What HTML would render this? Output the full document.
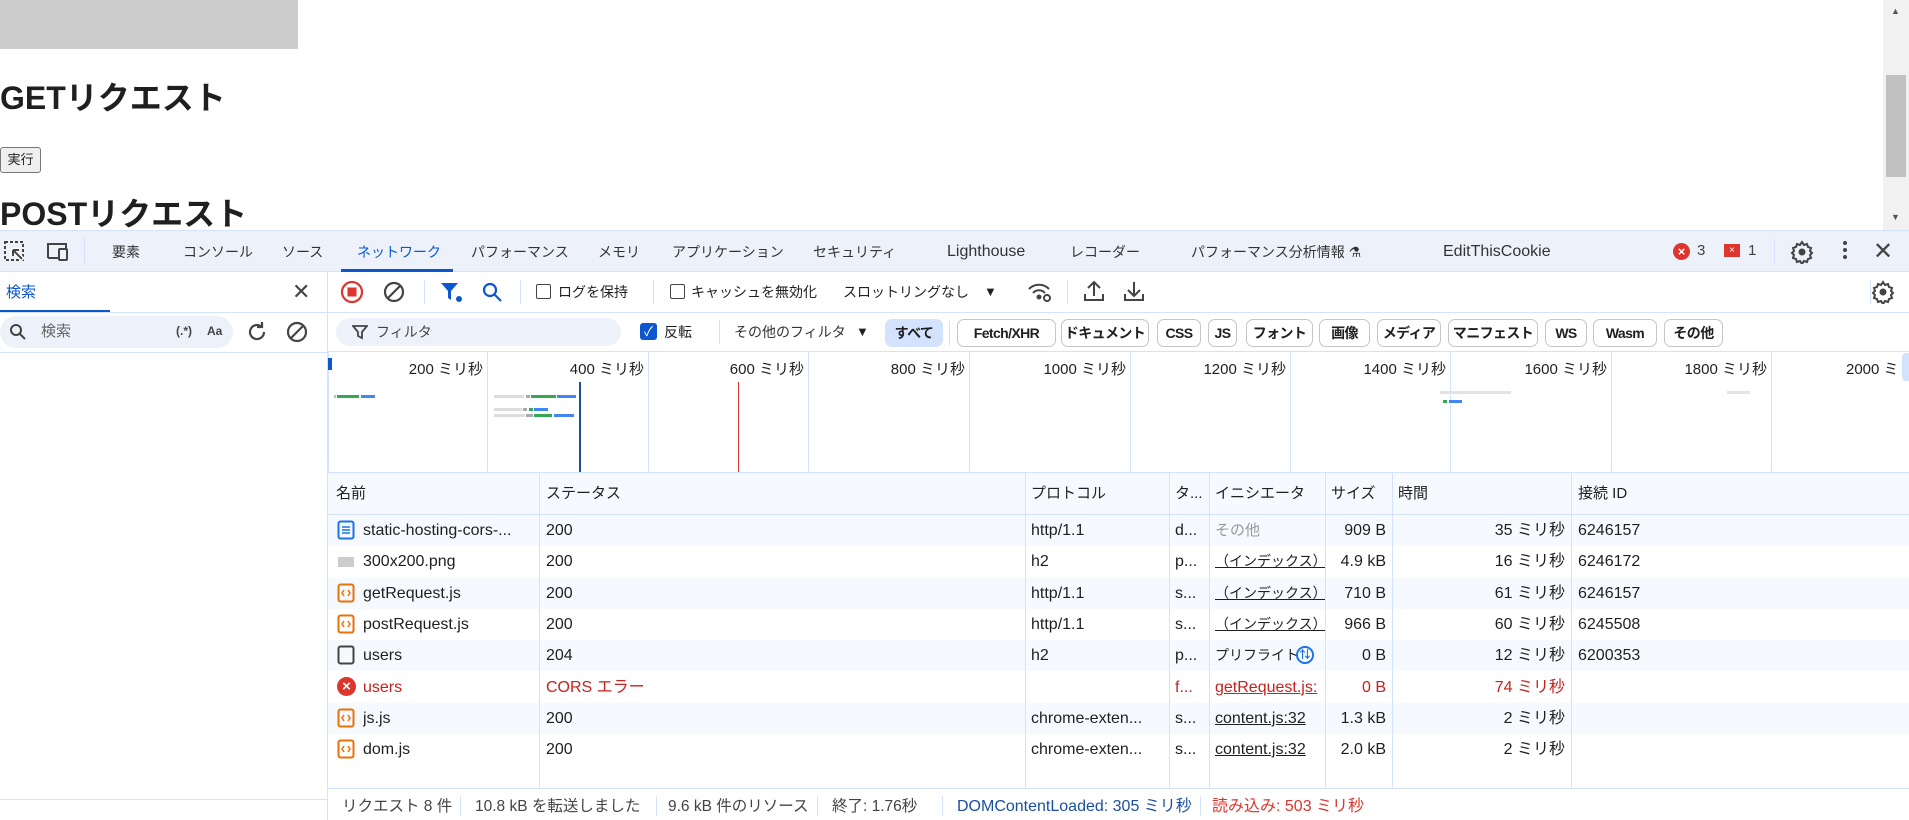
<!DOCTYPE html>
<html><head><meta charset="utf-8"><style>
*{margin:0;padding:0;box-sizing:border-box}
body{width:1909px;height:820px;overflow:hidden;position:relative;background:#fff;font-family:"Liberation Sans","Noto Sans CJK JP",sans-serif;color:#1f1f1f}
.a{position:absolute;white-space:nowrap}
.t{font-size:15px;line-height:18px}
.tj{font-size:14px;line-height:18px}
.vl{position:absolute;width:1px;background:#d3e3fd}
.hl{position:absolute;height:1px;background:#d3e3fd}
.chip{position:absolute;top:319px;height:28px;border:1px solid #c4c7c5;border-radius:7px;font-size:14px;line-height:26px;text-align:center;font-weight:bold;color:#1f1f1f;white-space:nowrap;overflow:hidden;letter-spacing:-0.6px}
.row{position:absolute;left:328px;width:1581px;height:31px}
.cell{position:absolute;font-size:16px;line-height:31px;white-space:nowrap;overflow:hidden}
.r{text-align:right}
.cb{position:absolute;width:15px;height:15px;border:1.5px solid #444;border-radius:2px}
.st{font-size:15.5px;line-height:18px}
</style></head><body>
<div class="a" style="left:0;top:0;width:298px;height:49px;background:#ccc"></div>
<div class="a" style="left:0;top:78px;font-size:32px;font-weight:bold;line-height:40px">GETリクエスト</div>
<div class="a" style="left:0;top:147px;width:41px;height:26px;border:1px solid #777;border-radius:3px;background:#efefef;font-size:13px;line-height:24px;text-align:center">実行</div>
<div class="a" style="left:0;top:194px;font-size:32px;font-weight:bold;line-height:40px">POSTリクエスト</div>
<div class="a" style="left:1883px;top:0;width:26px;height:231px;background:#f1f1f1"></div>
<div class="a" style="left:1886px;top:75px;width:20px;height:102px;background:#c1c1c1"></div>
<div class="a" style="left:1891px;top:6px;font-size:9px;color:#555">▲</div>
<div class="a" style="left:1891px;top:212px;font-size:9px;color:#555">▼</div>

<div class="a" style="left:0;top:230px;width:1909px;height:42px;background:#edf2fa;border-top:1px solid #d3e3fd;border-bottom:1px solid #d3e3fd"></div>
<svg class="a" style="left:3px;top:240px" width="100" height="24" viewBox="0 0 100 24" fill="none" stroke="#444" stroke-width="2">
<rect x="2" y="2" width="18" height="18" stroke-dasharray="3 2"/><path d="M10 10l10 10M10 10h6M10 10v6" stroke="#fff" stroke-width="5"/><path d="M10 10l9 9M10 10h6M10 10v6"/>
<path d="M45 18V4h18v5M45 18h10"/><rect x="56" y="9" width="8" height="11" rx="1"/></svg>
<div class="vl" style="left:84px;top:238px;height:26px"></div>
<div class="a tj" style="top:243px;left:112px;color:#333">要素</div>
<div class="a tj" style="top:243px;left:183px;color:#333">コンソール</div>
<div class="a tj" style="top:243px;left:282px;color:#333">ソース</div>
<div class="a tj" style="top:243px;left:357px;color:#0b57d0">ネットワーク</div>
<div class="a" style="top:269px;left:341px;width:112px;height:3px;background:#0b57d0"></div>
<div class="a tj" style="top:243px;left:471px;color:#333">パフォーマンス</div>
<div class="a tj" style="top:243px;left:598px;color:#333">メモリ</div>
<div class="a tj" style="top:243px;left:672px;color:#333">アプリケーション</div>
<div class="a tj" style="top:243px;left:813px;color:#333">セキュリティ</div>
<div class="a" style="top:243px;left:947px;color:#333;font-size:16px;line-height:18px">Lighthouse</div>
<div class="a tj" style="top:243px;left:1070px;color:#333">レコーダー</div>
<div class="a tj" style="top:243px;left:1191px;color:#333">パフォーマンス分析情報 ⚗</div>
<div class="a" style="top:243px;left:1443px;color:#333;font-size:16px;line-height:18px">EditThisCookie</div>
<div class="a" style="left:1673px;top:243px;width:17px;height:17px;border-radius:50%;background:#dc362e;color:#fff;font-size:13px;line-height:17px;text-align:center;font-weight:bold">×</div>
<div class="a t" style="top:242px;left:1697px;color:#444">3</div>
<div class="a" style="left:1724px;top:244px;width:16px;height:13px;background:#dc362e;color:#fff;font-size:10px;line-height:13px;text-align:center">×</div>
<div class="a t" style="top:242px;left:1748px;color:#444">1</div>
<div class="vl" style="left:1774px;top:239px;height:24px"></div>
<svg class="a" style="left:1790px;top:240px" width="24" height="24" viewBox="0 0 24 24"><path d="M12 2l2 3 3-1 1 3 3 1-1 3 2 2-2 2 1 3-3 1-1 3-3-1-2 3-2-3-3 1-1-3-3-1 1-3-2-2 2-2-1-3 3-1 1-3 3 1z" fill="none" stroke="#444" stroke-width="2"/><circle cx="12" cy="12" r="3.5" fill="#444"/></svg>
<div class="a" style="left:1843px;top:241px;width:4px;height:4px;border-radius:50%;background:#444;box-shadow:0 7px #444,0 14px #444"></div>
<div class="a" style="left:1873px;top:237px;font-size:24px;color:#444">✕</div>

<div class="vl" style="left:327px;top:272px;height:548px"></div>
<div class="a t" style="left:6px;top:284px;color:#0b57d0">検索</div>
<div class="a" style="left:0;top:310px;width:110px;height:2px;background:#0b57d0"></div>
<div class="a" style="left:292px;top:279px;font-size:22px;color:#444">✕</div>
<div class="hl" style="left:0;top:312px;width:327px"></div>
<div class="a" style="left:0;top:316px;width:233px;height:32px;border-radius:16px;background:#edf2fa"></div>
<svg class="a" style="left:9px;top:323px" width="18" height="18" viewBox="0 0 18 18" fill="none" stroke="#444" stroke-width="2"><circle cx="7" cy="7" r="5"/><path d="M11 11l5 5"/></svg>
<div class="a t" style="left:41px;top:323px;color:#666">検索</div>
<div class="a" style="left:176px;top:324px;font-size:12px;color:#444;font-weight:bold">(.*)</div>
<div class="a" style="left:207px;top:324px;font-size:12px;color:#444;font-weight:bold">Aa</div>
<svg class="a" style="left:245px;top:320px" width="24" height="24" viewBox="0 0 24 24" fill="none" stroke="#444" stroke-width="2.2"><path d="M19 12a7 7 0 1 1-3-5.7"/><path d="M17 2v5h-5" /></svg>
<svg class="a" style="left:285px;top:320px" width="24" height="24" viewBox="0 0 24 24" fill="none" stroke="#444" stroke-width="2.2"><circle cx="12" cy="12" r="9"/><path d="M6 18L18 6"/></svg>
<div class="hl" style="left:0;top:352px;width:327px"></div>
<div class="hl" style="left:0;top:799px;width:327px"></div>

<svg class="a" style="left:340px;top:280px" width="24" height="24" viewBox="0 0 24 24"><circle cx="12" cy="12" r="10" fill="none" stroke="#dc362e" stroke-width="2.2"/><rect x="7.5" y="7.5" width="9" height="9" fill="#dc362e"/></svg>
<svg class="a" style="left:382px;top:280px" width="24" height="24" viewBox="0 0 24 24" fill="none" stroke="#444" stroke-width="2.2"><circle cx="12" cy="12" r="9"/><path d="M6 18L18 6"/></svg>
<div class="vl" style="left:424px;top:280px;height:24px"></div>
<svg class="a" style="left:440px;top:281px" width="24" height="22" viewBox="0 0 24 22"><path d="M1 2h17l-7 8v9l-3-2v-7z" fill="#0b57d0"/><circle cx="19" cy="18" r="3" fill="#0b57d0"/></svg>
<svg class="a" style="left:481px;top:281px" width="22" height="22" viewBox="0 0 22 22" fill="none" stroke="#0b57d0" stroke-width="2.2"><circle cx="9" cy="9" r="6"/><path d="M13 13l7 7"/></svg>
<div class="vl" style="left:520px;top:280px;height:24px"></div>
<div class="cb" style="left:536px;top:284px"></div>
<div class="a tj" style="left:558px;top:283px">ログを保持</div>
<div class="vl" style="left:653px;top:280px;height:24px"></div>
<div class="cb" style="left:670px;top:284px"></div>
<div class="a tj" style="left:691px;top:283px">キャッシュを無効化</div>
<div class="a tj" style="left:843px;top:283px">スロットリングなし</div>
<div class="a" style="left:984px;top:284px;font-size:13px">▼</div>
<svg class="a" style="left:1026px;top:280px" width="28" height="24" viewBox="0 0 28 24" fill="none" stroke="#444" stroke-width="2"><path d="M3 9a14 14 0 0 1 20 0M7 13a8 8 0 0 1 12 0"/><circle cx="13" cy="17" r="1.5" fill="#444"/><circle cx="21" cy="18" r="3"/></svg>
<div class="vl" style="left:1067px;top:280px;height:24px"></div>
<svg class="a" style="left:1083px;top:279px" width="22" height="24" viewBox="0 0 22 24" fill="none" stroke="#444" stroke-width="2"><path d="M11 17V3M5 9l6-6 6 6M2 15v6h18v-6"/></svg>
<svg class="a" style="left:1123px;top:279px" width="22" height="24" viewBox="0 0 22 24" fill="none" stroke="#444" stroke-width="2"><path d="M11 3v14M5 11l6 6 6-6M2 15v6h18v-6"/></svg>
<div class="vl" style="left:1870px;top:280px;height:24px"></div>
<svg class="a" style="left:1871px;top:280px" width="24" height="24" viewBox="0 0 24 24"><path d="M12 2l2 3 3-1 1 3 3 1-1 3 2 2-2 2 1 3-3 1-1 3-3-1-2 3-2-3-3 1-1-3-3-1 1-3-2-2 2-2-1-3 3-1 1-3 3 1z" fill="none" stroke="#444" stroke-width="2"/><circle cx="12" cy="12" r="3.5" fill="#444"/></svg>
<div class="hl" style="left:328px;top:312px;width:1581px"></div>

<div class="a" style="left:336px;top:318px;width:285px;height:28px;border-radius:14px;background:#edf2fa"></div>
<svg class="a" style="left:352px;top:324px" width="16" height="16" viewBox="0 0 16 16" fill="none" stroke="#444" stroke-width="1.8"><path d="M1 2h14l-5 6v6l-4-2V8z"/></svg>
<div class="a tj" style="left:376px;top:323px;color:#444">フィルタ</div>
<div class="a" style="left:640px;top:323px;width:17px;height:17px;border-radius:3px;background:#0b57d0;color:#fff;font-size:13px;line-height:17px;text-align:center">✓</div>
<div class="a tj" style="left:664px;top:323px">反転</div>
<div class="vl" style="left:719px;top:320px;height:24px"></div>
<div class="a tj" style="left:734px;top:323px;color:#333">その他のフィルタ</div>
<div class="a" style="left:856px;top:324px;font-size:13px">▼</div>
<div class="chip" style="left:885px;width:58px;background:#d3e3fd;border-color:#d3e3fd">すべて</div>
<div class="vl" style="left:949px;top:321px;height:24px"></div>
<div class="chip" style="left:957px;width:99px">Fetch/XHR</div>
<div class="chip" style="left:1061px;width:88px">ドキュメント</div>
<div class="chip" style="left:1157px;width:44px">CSS</div>
<div class="chip" style="left:1208px;width:29px">JS</div>
<div class="chip" style="left:1246px;width:67px">フォント</div>
<div class="chip" style="left:1319px;width:51px">画像</div>
<div class="chip" style="left:1377px;width:64px">メディア</div>
<div class="chip" style="left:1448px;width:90px">マニフェスト</div>
<div class="chip" style="left:1545px;width:42px">WS</div>
<div class="chip" style="left:1593px;width:64px">Wasm</div>
<div class="chip" style="left:1664px;width:59px">その他</div>
<div class="hl" style="left:328px;top:351px;width:1581px"></div>

<div class="vl" style="left:328px;top:352px;height:120px"></div>
<div class="a" style="left:328px;top:358px;width:4px;height:12px;background:#0b57d0"></div>
<div class="vl" style="left:487px;top:352px;height:120px"></div>
<div class="vl" style="left:648px;top:352px;height:120px"></div>
<div class="vl" style="left:808px;top:352px;height:120px"></div>
<div class="vl" style="left:969px;top:352px;height:120px"></div>
<div class="vl" style="left:1130px;top:352px;height:120px"></div>
<div class="vl" style="left:1290px;top:352px;height:120px"></div>
<div class="vl" style="left:1450px;top:352px;height:120px"></div>
<div class="vl" style="left:1611px;top:352px;height:120px"></div>
<div class="vl" style="left:1771px;top:352px;height:120px"></div>
<div class="a t r" style="left:387px;width:96px;top:361px">200 ミリ秒</div>
<div class="a t r" style="left:548px;width:96px;top:361px">400 ミリ秒</div>
<div class="a t r" style="left:708px;width:96px;top:361px">600 ミリ秒</div>
<div class="a t r" style="left:869px;width:96px;top:361px">800 ミリ秒</div>
<div class="a t r" style="left:1030px;width:96px;top:361px">1000 ミリ秒</div>
<div class="a t r" style="left:1190px;width:96px;top:361px">1200 ミリ秒</div>
<div class="a t r" style="left:1350px;width:96px;top:361px">1400 ミリ秒</div>
<div class="a t r" style="left:1511px;width:96px;top:361px">1600 ミリ秒</div>
<div class="a t r" style="left:1671px;width:96px;top:361px">1800 ミリ秒</div>
<div class="a t" style="left:1846px;top:361px">2000 ミ</div>
<div class="a" style="left:1902px;top:353px;width:7px;height:28px;background:#d3e3fd;border-radius:4px 0 0 4px"></div>
<div class="a" style="left:579px;top:382px;width:2px;height:90px;background:#1a4fa0"></div>
<div class="a" style="left:738px;top:382px;width:1px;height:90px;background:#dc362e"></div>
<div class="a" style="left:334px;top:395px;width:2px;height:3px;background:#bbb"></div>
<div class="a" style="left:337px;top:395px;width:22px;height:3px;background:#34a853"></div>
<div class="a" style="left:361px;top:395px;width:14px;height:3px;background:#4285f4"></div>
<div class="a" style="left:494px;top:395px;width:30px;height:3px;background:#ddd"></div>
<div class="a" style="left:526px;top:395px;width:4px;height:3px;background:#aaa"></div>
<div class="a" style="left:531px;top:395px;width:25px;height:3px;background:#34a853"></div>
<div class="a" style="left:557px;top:395px;width:19px;height:3px;background:#4285f4"></div>
<div class="a" style="left:494px;top:408px;width:28px;height:3px;background:#ddd"></div>
<div class="a" style="left:523px;top:408px;width:4px;height:3px;background:#aaa"></div>
<div class="a" style="left:529px;top:408px;width:4px;height:3px;background:#34a853"></div>
<div class="a" style="left:534px;top:408px;width:14px;height:3px;background:#4285f4"></div>
<div class="a" style="left:494px;top:414px;width:31px;height:3px;background:#ddd"></div>
<div class="a" style="left:526px;top:414px;width:7px;height:3px;background:#aaa"></div>
<div class="a" style="left:534px;top:414px;width:18px;height:3px;background:#34a853"></div>
<div class="a" style="left:554px;top:414px;width:20px;height:3px;background:#4285f4"></div>
<div class="a" style="left:1440px;top:391px;width:71px;height:3px;background:#e3e3e3"></div>
<div class="a" style="left:1443px;top:400px;width:4px;height:3px;background:#34a853"></div>
<div class="a" style="left:1449px;top:400px;width:13px;height:3px;background:#4285f4"></div>
<div class="a" style="left:1727px;top:391px;width:23px;height:3px;background:#e3e3e3"></div>
<div class="hl" style="left:328px;top:472px;width:1581px"></div>

<div class="row" style="top:473px;height:41px;background:#f6f9fe"></div>
<div class="hl" style="left:328px;top:514px;width:1581px"></div>
<div class="row" style="top:515px;background:#f6f9fe"></div>
<div class="row" style="top:578px;background:#f6f9fe"></div>
<div class="row" style="top:640px;background:#f6f9fe"></div>
<div class="row" style="top:703px;background:#f6f9fe"></div>
<div class="vl" style="left:539px;top:473px;height:315px"></div>
<div class="vl" style="left:1025px;top:473px;height:315px"></div>
<div class="vl" style="left:1169px;top:473px;height:315px"></div>
<div class="vl" style="left:1209px;top:473px;height:315px"></div>
<div class="vl" style="left:1325px;top:473px;height:315px"></div>
<div class="vl" style="left:1392px;top:473px;height:315px"></div>
<div class="vl" style="left:1571px;top:473px;height:315px"></div>
<div class="cell" style="left:336px;top:478px;font-size:15px">名前</div>
<div class="cell" style="left:546px;top:478px;font-size:15px">ステータス</div>
<div class="cell" style="left:1031px;top:478px;font-size:15px">プロトコル</div>
<div class="cell" style="left:1175px;top:478px;font-size:15px">タ...</div>
<div class="cell" style="left:1215px;top:478px;font-size:15px">イニシエータ</div>
<div class="cell" style="left:1331px;top:478px;font-size:15px">サイズ</div>
<div class="cell" style="left:1398px;top:478px;font-size:15px">時間</div>
<div class="cell" style="left:1578px;top:478px;font-size:15px">接続 ID</div>

<svg class="a" style="left:337px;top:520px" width="18" height="20" viewBox="0 0 18 20"><rect x="1.5" y="1.5" width="15" height="17" rx="2" fill="none" stroke="#1a73e8" stroke-width="2"/><path d="M5 7h8M5 10h8M5 13h8" stroke="#1a73e8" stroke-width="1.6"/></svg>
<div class="a" style="left:338px;top:557px;width:16px;height:10px;background:#ccc"></div>
<svg class="a" style="left:337px;top:583px" width="18" height="20" viewBox="0 0 18 20"><rect x="1.5" y="1.5" width="15" height="17" rx="2" fill="none" stroke="#e8710a" stroke-width="2"/><path d="M7 7l-2 3 2 3M11 7l2 3-2 3" fill="none" stroke="#e8710a" stroke-width="1.5"/></svg>
<svg class="a" style="left:337px;top:614px" width="18" height="20" viewBox="0 0 18 20"><rect x="1.5" y="1.5" width="15" height="17" rx="2" fill="none" stroke="#e8710a" stroke-width="2"/><path d="M7 7l-2 3 2 3M11 7l2 3-2 3" fill="none" stroke="#e8710a" stroke-width="1.5"/></svg>
<svg class="a" style="left:337px;top:645px" width="18" height="20" viewBox="0 0 18 20"><rect x="1.5" y="1.5" width="15" height="17" rx="2" fill="none" stroke="#444" stroke-width="2"/></svg>
<div class="a" style="left:337px;top:677px;width:19px;height:19px;border-radius:50%;background:#dc362e;color:#fff;font-size:15px;line-height:19px;text-align:center;font-weight:bold">×</div>
<svg class="a" style="left:337px;top:708px" width="18" height="20" viewBox="0 0 18 20"><rect x="1.5" y="1.5" width="15" height="17" rx="2" fill="none" stroke="#e8710a" stroke-width="2"/><path d="M7 7l-2 3 2 3M11 7l2 3-2 3" fill="none" stroke="#e8710a" stroke-width="1.5"/></svg>
<svg class="a" style="left:337px;top:739px" width="18" height="20" viewBox="0 0 18 20"><rect x="1.5" y="1.5" width="15" height="17" rx="2" fill="none" stroke="#e8710a" stroke-width="2"/><path d="M7 7l-2 3 2 3M11 7l2 3-2 3" fill="none" stroke="#e8710a" stroke-width="1.5"/></svg>

<div class="cell" style="left:363px;top:515px">static-hosting-cors-...</div>
<div class="cell" style="left:546px;top:515px">200</div>
<div class="cell" style="left:1031px;top:515px">http/1.1</div>
<div class="cell" style="left:1175px;top:515px">d...</div>
<div class="cell" style="left:1215px;top:515px;color:#999;font-size:15px">その他</div>
<div class="cell r" style="left:1326px;width:60px;top:515px">909 B</div>
<div class="cell r" style="left:1393px;width:172px;top:515px">35 ミリ秒</div>
<div class="cell" style="left:1578px;top:515px">6246157</div>

<div class="cell" style="left:363px;top:546px">300x200.png</div>
<div class="cell" style="left:546px;top:546px">200</div>
<div class="cell" style="left:1031px;top:546px">h2</div>
<div class="cell" style="left:1175px;top:546px">p...</div>
<div class="cell" style="left:1215px;top:546px;text-decoration:underline;width:110px;font-size:14px">（インデックス）</div>
<div class="cell r" style="left:1326px;width:60px;top:546px">4.9 kB</div>
<div class="cell r" style="left:1393px;width:172px;top:546px">16 ミリ秒</div>
<div class="cell" style="left:1578px;top:546px">6246172</div>

<div class="cell" style="left:363px;top:578px">getRequest.js</div>
<div class="cell" style="left:546px;top:578px">200</div>
<div class="cell" style="left:1031px;top:578px">http/1.1</div>
<div class="cell" style="left:1175px;top:578px">s...</div>
<div class="cell" style="left:1215px;top:578px;text-decoration:underline;width:110px;font-size:14px">（インデックス）</div>
<div class="cell r" style="left:1326px;width:60px;top:578px">710 B</div>
<div class="cell r" style="left:1393px;width:172px;top:578px">61 ミリ秒</div>
<div class="cell" style="left:1578px;top:578px">6246157</div>

<div class="cell" style="left:363px;top:609px">postRequest.js</div>
<div class="cell" style="left:546px;top:609px">200</div>
<div class="cell" style="left:1031px;top:609px">http/1.1</div>
<div class="cell" style="left:1175px;top:609px">s...</div>
<div class="cell" style="left:1215px;top:609px;text-decoration:underline;width:110px;font-size:14px">（インデックス）</div>
<div class="cell r" style="left:1326px;width:60px;top:609px">966 B</div>
<div class="cell r" style="left:1393px;width:172px;top:609px">60 ミリ秒</div>
<div class="cell" style="left:1578px;top:609px">6245508</div>

<div class="cell" style="left:363px;top:640px">users</div>
<div class="cell" style="left:546px;top:640px">204</div>
<div class="cell" style="left:1031px;top:640px">h2</div>
<div class="cell" style="left:1175px;top:640px">p...</div>
<div class="cell" style="left:1215px;top:640px;font-size:14px">プリフライト</div>
<div class="a" style="left:1296px;top:646px;width:18px;height:18px;border-radius:50%;border:2px solid #1a73e8;color:#1a73e8;font-size:11px;line-height:14px;text-align:center;font-weight:bold;background:#fff">⇅</div>
<div class="cell r" style="left:1326px;width:60px;top:640px">0 B</div>
<div class="cell r" style="left:1393px;width:172px;top:640px">12 ミリ秒</div>
<div class="cell" style="left:1578px;top:640px">6200353</div>

<div class="cell" style="left:363px;top:672px;color:#c5221f">users</div>
<div class="cell" style="left:546px;top:672px;color:#c5221f">CORS エラー</div>
<div class="cell" style="left:1175px;top:672px;color:#c5221f">f...</div>
<div class="cell" style="left:1215px;top:672px;color:#c5221f;text-decoration:underline;width:109px">getRequest.js:</div>
<div class="cell r" style="left:1326px;width:60px;top:672px;color:#c5221f">0 B</div>
<div class="cell r" style="left:1393px;width:172px;top:672px;color:#c5221f">74 ミリ秒</div>

<div class="cell" style="left:363px;top:703px">js.js</div>
<div class="cell" style="left:546px;top:703px">200</div>
<div class="cell" style="left:1031px;top:703px">chrome-exten...</div>
<div class="cell" style="left:1175px;top:703px">s...</div>
<div class="cell" style="left:1215px;top:703px;text-decoration:underline">content.js:32</div>
<div class="cell r" style="left:1326px;width:60px;top:703px">1.3 kB</div>
<div class="cell r" style="left:1393px;width:172px;top:703px">2 ミリ秒</div>

<div class="cell" style="left:363px;top:734px">dom.js</div>
<div class="cell" style="left:546px;top:734px">200</div>
<div class="cell" style="left:1031px;top:734px">chrome-exten...</div>
<div class="cell" style="left:1175px;top:734px">s...</div>
<div class="cell" style="left:1215px;top:734px;text-decoration:underline">content.js:32</div>
<div class="cell r" style="left:1326px;width:60px;top:734px">2.0 kB</div>
<div class="cell r" style="left:1393px;width:172px;top:734px">2 ミリ秒</div>

<div class="hl" style="left:328px;top:788px;width:1581px"></div>
<div class="a" style="left:328px;top:789px;width:1581px;height:31px;background:#fff"></div>
<div class="a st" style="left:342px;top:798px;color:#444">リクエスト 8 件</div>
<div class="vl" style="left:460px;top:796px;height:20px"></div>
<div class="a st" style="left:475px;top:798px;color:#444">10.8 kB を転送しました</div>
<div class="vl" style="left:656px;top:796px;height:20px"></div>
<div class="a st" style="left:668px;top:798px;color:#444">9.6 kB 件のリソース</div>
<div class="vl" style="left:817px;top:796px;height:20px"></div>
<div class="a st" style="left:832px;top:798px;color:#444">終了: 1.76秒</div>
<div class="vl" style="left:942px;top:796px;height:20px"></div>
<div class="a" style="left:957px;top:798px;color:#1a4fa0;font-size:16px;line-height:18px">DOMContentLoaded: 305 ミリ秒</div>
<div class="vl" style="left:1200px;top:796px;height:20px"></div>
<div class="a" style="left:1212px;top:798px;color:#dc362e;font-size:16px;line-height:18px">読み込み: 503 ミリ秒</div>
</body></html>
